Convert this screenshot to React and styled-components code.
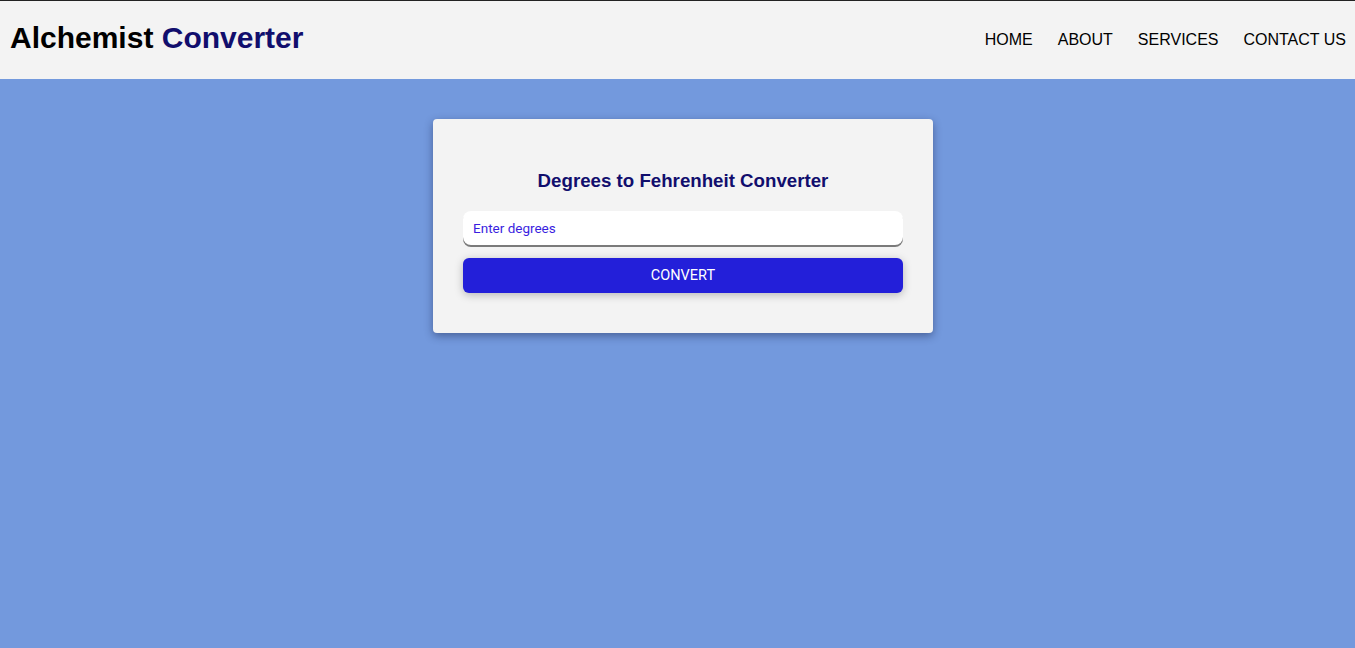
import React from "react";
import styled, { createGlobalStyle } from "styled-components";

const Global = createGlobalStyle`
  html, body {
    margin: 0;
    padding: 0;
    background: #7399dd;
    font-family: "Liberation Sans", Arial, sans-serif;
  }
  * { box-sizing: border-box; }
`;

/* top bar */
const Header = styled.header`
  height: 79px;
  background: #f3f3f3;
  border-top: 1px solid #222;
  display: flex;
  align-items: center;
  justify-content: space-between;
  padding: 0 9px 0 10px;
`;

const Logo = styled.h1`
  margin: 0 0 4px;
  font-size: 30px;
  font-weight: 700;
  color: #000;

  span {
    color: #110e6d;
  }
`;

const Nav = styled.nav`
  display: flex;
  gap: 25px;
  margin-bottom: 1px;
`;

const NavLink = styled.a`
  font-size: 16px;
  color: #000;
  text-decoration: none;
  text-transform: uppercase;
  cursor: pointer;
`;

/* body */
const Main = styled.main`
  min-height: calc(100vh - 79px);
  display: flex;
  justify-content: center;
  align-items: flex-start;
  padding: 40px 0 0 11px;
`;

const Card = styled.section`
  width: 500px;
  background: #f3f3f3;
  border-radius: 4px;
  box-shadow: 0 3px 8px rgba(20, 30, 70, 0.45);
  padding: 51px 30px 40px;
  display: flex;
  flex-direction: column;
`;

const Title = styled.h2`
  margin: 0 0 19px;
  text-align: center;
  font-size: 18.7px;
  font-weight: 700;
  color: #110e6d;
`;

const Input = styled.input`
  height: 34px;
  border: none;
  border-radius: 8px;
  background: #fff;
  box-shadow: 0 2px 0 #7a7a7a;
  padding: 0 10px;
  font-family: Roboto, "Liberation Sans", sans-serif;
  font-size: 13.5px;
  color: #3a1ee0;
  outline: none;

  &::placeholder {
    color: #3a1ee0;
  }
`;

const Button = styled.button`
  margin-top: 13px;
  height: 35px;
  border: none;
  border-radius: 6px;
  background: #231fd9;
  color: #fff;
  font-family: Roboto, "Liberation Sans", sans-serif;
  font-size: 14.5px;
  text-transform: uppercase;
  box-shadow: 0 2px 8px rgba(0, 0, 0, 0.25);
  cursor: pointer;
`;

const links = ["Home", "About", "Services", "Contact Us"];

export default function App() {
  return (
    <>
      <Global />
      <Header>
        <Logo>
          Alchemist <span>Converter</span>
        </Logo>
        <Nav>
          {links.map((l) => (
            <NavLink key={l}>{l}</NavLink>
          ))}
        </Nav>
      </Header>
      <Main>
        <Card>
          <Title>Degrees to Fehrenheit Converter</Title>
          <Input placeholder="Enter degrees" />
          <Button>Convert</Button>
        </Card>
      </Main>
    </>
  );
}
